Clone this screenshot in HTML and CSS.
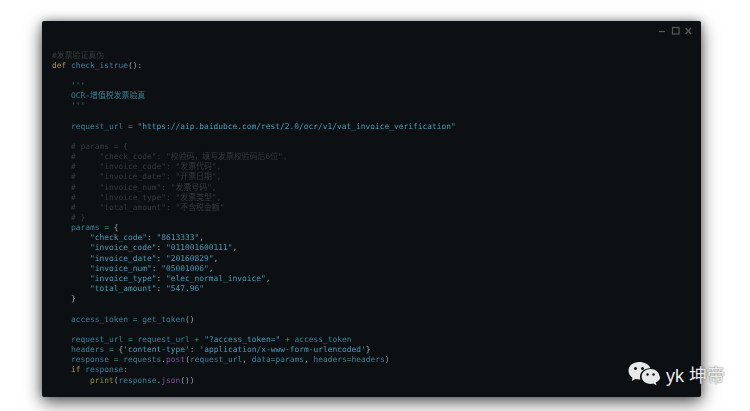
FILE: index.html
```html
<!DOCTYPE html>
<html lang="zh">
<head>
<meta charset="utf-8">
<title>check_istrue</title>
<link rel="stylesheet" href="styles.css">
</head>
<body>
<main class="window">
<div class="controls">
<svg class="ctl" width="34" height="10" viewBox="0 0 34 10" aria-hidden="true"><path d="M0 5.500h6" /><rect x="13.500" y="1.500" width="6.500" height="6.500"/><path d="M26.500 2l5.500 6M32 2l-5.500 6"/></svg>
</div>
<pre class="code"><span class="c">#发票验证真伪</span>
<span class="k">def</span> <span class="n">check_istrue</span><span class="p">():</span>

    <span class="n">'''</span>
    <span class="n">OCR-增值税发票验真</span>
    <span class="n">'''</span>

    <span class="n">request_url</span> <span class="o">=</span> <span class="s">"https://aip.baidubce.com/rest/2.0/ocr/v1/vat_invoice_verification"</span>

    <span class="c"># params = {</span>
    <span class="c">#     "check_code": "校验码，填写发票校验码后6位",</span>
    <span class="c">#     "invoice_code": "发票代码",</span>
    <span class="c">#     "invoice_date": "开票日期",</span>
    <span class="c">#     "invoice_num": "发票号码",</span>
    <span class="c">#     "invoice_type": "发票类型",</span>
    <span class="c">#     "total_amount": "不含税金额"</span>
    <span class="c"># }</span>
    <span class="n">params</span> <span class="o">=</span> <span class="p">{</span>
        <span class="s">"check_code"</span><span class="p">:</span> <span class="s">"8613333"</span><span class="p">,</span>
        <span class="s">"invoice_code"</span><span class="p">:</span> <span class="s">"011001600111"</span><span class="p">,</span>
        <span class="s">"invoice_date"</span><span class="p">:</span> <span class="s">"20160829"</span><span class="p">,</span>
        <span class="s">"invoice_num"</span><span class="p">:</span> <span class="s">"05001006"</span><span class="p">,</span>
        <span class="s">"invoice_type"</span><span class="p">:</span> <span class="s">"elec_normal_invoice"</span><span class="p">,</span>
        <span class="s">"total_amount"</span><span class="p">:</span> <span class="s">"547.96"</span>
    <span class="p">}</span>

    <span class="n">access_token</span> <span class="o">=</span> <span class="n">get_token</span><span class="p">()</span>

    <span class="n">request_url</span> <span class="o">=</span> <span class="n">request_url</span> <span class="o">+</span> <span class="s">"?access_token="</span> <span class="o">+</span> <span class="n">access_token</span>
    <span class="n">headers</span> <span class="o">=</span> <span class="p">{</span><span class="s">'content-type'</span><span class="p">:</span> <span class="s">'application/x-www-form-urlencoded'</span><span class="p">}</span>
    <span class="n">response</span> <span class="o">=</span> <span class="n">requests</span><span class="p">.</span><span class="f">post</span><span class="p">(</span><span class="n">request_url</span><span class="p">,</span> <span class="n">data</span><span class="o">=</span><span class="n">params</span><span class="p">,</span> <span class="n">headers</span><span class="o">=</span><span class="n">headers</span><span class="p">)</span>
    <span class="k">if</span> <span class="n">response</span><span class="p">:</span>
        <span class="b">print</span><span class="p">(</span><span class="n">response</span><span class="p">.</span><span class="f">json</span><span class="p">())</span></pre>
</main>
<aside class="mark">
<svg class="wechat" width="32" height="26" viewBox="0 0 32 26" aria-hidden="true">
<path class="bub" d="M11 1C5 1 .5 4.800.500 9.800c0 2.900 1.600 5.300 4 6.900L3.800 20l3.600-2c1.200.300 2.400.500 3.600.500 .5 0 1 0 1.400-.1-.3-.9-.4-1.800-.4-2.700 0-4.700 4.300-8.400 9.700-8.400h.8C21.200 3.400 16.500 1 11 1z"/>
<path class="bub" d="M31.500 15.500c0-4.100-4-7.400-8.900-7.400s-8.900 3.300-8.900 7.400 4 7.400 8.900 7.400c1 0 2-.1 2.900-.4l3 1.900-.7-2.900c2.800-1.400 4.700-3.800 4.700-6z"/>
<circle class="eye" cx="7.500" cy="7.500" r="1.500"/><circle class="eye" cx="14.500" cy="7.500" r="1.500"/>
<circle class="eye" cx="19.500" cy="13.500" r="1.200"/><circle class="eye" cx="25.500" cy="13.500" r="1.200"/>
</svg>
<span class="mark-text">yk 坤帝</span>
</aside>
</body>
</html>
```
FILE: styles.css
```css
html, body {
  margin: 0;
  padding: 0;
  height: 411px;
  overflow: hidden;
  background: #fff;
}
body {
  padding: 21px 49px 0 42px;
  box-sizing: border-box;
  position: relative;
  font-family: "DejaVu Sans Mono", "Noto Sans CJK SC", monospace;
}
.window {
  height: 376px;
  background: #0c1012;
  border-radius: 2px;
  box-sizing: border-box;
  padding: 5px 8px 0 10px;
  box-shadow: 0 6px 18px rgba(0, 0, 0, .6), 0 0 8px rgba(0, 0, 0, .35);
  overflow: hidden;
}
.controls {
  display: flex;
  justify-content: flex-end;
  height: 10px;
  filter: blur(.5px);
}
.ctl {
  fill: none;
  stroke: #55595b;
  stroke-width: 1.200;
}
.code {
  margin: 14.500px 0 0;
  font-family: "DejaVu Sans Mono", "Noto Sans CJK SC", monospace;
  font-size: 7.900px;
  line-height: 10.150px;
  color: #3a8199;
  filter: blur(.55px);
  white-space: pre;
}
.c { color: #363c3f; }
.k { color: #b0954a; }
.n { color: #3a8199; }
.s { color: #4a9ab8; }
.o { color: #3a9080; }
.p { color: #9aa1a4; }
.f { color: #80529c; }
.b { color: #869538; }
.mark {
  position: absolute;
  left: 628px;
  top: 361px;
  display: flex;
  align-items: center;
  gap: 6px;
  font-family: "Liberation Sans", "Noto Sans CJK SC", sans-serif;
  font-size: 18px;
  color: #ececec;
  text-shadow: 0 0 2px rgba(0, 0, 0, .7);
}
.wechat { flex: none; }
.bub { fill: #e8e8e8; }
.eye { fill: #0c1012; }
```
